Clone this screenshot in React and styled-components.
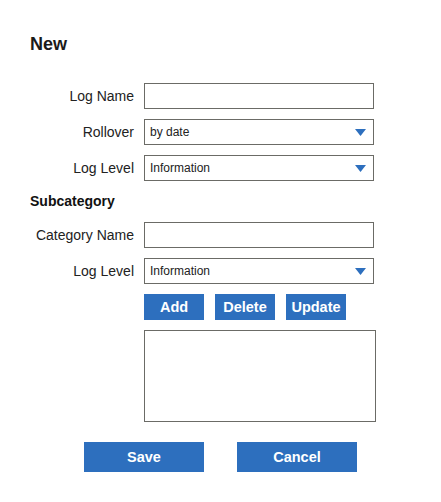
import React from "react";
import styled, { createGlobalStyle } from "styled-components";

const GlobalStyle = createGlobalStyle`
  html, body {
    margin: 0;
    padding: 0;
    background: #ffffff;
  }
  body {
    font-family: "Liberation Sans", Arial, sans-serif;
    color: #222222;
  }
`;

const BLUE = "#2d6fbe";
const BORDER = "#6b6b66";

const Page = styled.div`
  width: 441px;
  min-height: 502px;
  box-sizing: border-box;
  padding-top: 34px;
`;

const Title = styled.h1`
  margin: 0 0 28px 30px;
  font-size: 18px;
  line-height: 21px;
  font-weight: bold;
  color: #1a1a1a;
`;

const Form = styled.div`
  margin-left: 30px;
  display: grid;
  grid-template-columns: 104px 232px;
  grid-auto-rows: auto;
  column-gap: 10px;
  row-gap: 10px;
  align-items: center;
`;

const Label = styled.label`
  font-size: 14px;
  line-height: 16px;
  text-align: right;
  color: #222222;
  white-space: nowrap;
`;

const SectionTitle = styled.div`
  grid-column: 1 / -1;
  margin: 2px 0 3px;
  font-size: 14px;
  line-height: 16px;
  font-weight: bold;
  color: #111111;
`;

const TextInput = styled.input.attrs({ type: "text" })`
  width: 230px;
  height: 26px;
  box-sizing: border-box;
  margin: 0;
  padding: 0 6px;
  border: 1px solid ${BORDER};
  border-radius: 0;
  font-family: "Liberation Sans", Arial, sans-serif;
  font-size: 12px;
  color: #222222;
  outline: none;
`;

const SelectWrap = styled.div`
  position: relative;
  width: 230px;
  height: 26px;
`;

const Select = styled.select`
  appearance: none;
  -webkit-appearance: none;
  width: 100%;
  height: 100%;
  box-sizing: border-box;
  margin: 0;
  padding: 0 24px 0 5px;
  border: 1px solid ${BORDER};
  border-radius: 0;
  background: #ffffff;
  font-family: "Liberation Sans", Arial, sans-serif;
  font-size: 12px;
  color: #222222;
  outline: none;
`;

const Arrow = styled.svg`
  position: absolute;
  right: 8px;
  top: 10px;
  pointer-events: none;
`;

const Field = styled.div`
  grid-column: 2;
`;

const ActionRow = styled.div`
  grid-column: 2;
  display: flex;
  gap: 11px;
`;

const Button = styled.button`
  width: ${(p) => (p.wide ? "120px" : "60px")};
  height: ${(p) => (p.wide ? "30px" : "26px")};
  margin: 0;
  padding: 0;
  border: none;
  border-radius: 0;
  background: ${BLUE};
  color: #ffffff;
  font-family: "Liberation Sans", Arial, sans-serif;
  font-size: 14.5px;
  font-weight: bold;
  cursor: pointer;
`;

const ListBox = styled.div`
  grid-column: 2;
  width: 232px;
  height: 92px;
  box-sizing: border-box;
  border: 1px solid ${BORDER};
  background: #ffffff;
`;

const Footer = styled.div`
  display: flex;
  justify-content: center;
  gap: 33px;
  margin-top: 20px;
`;

function Dropdown({ value, options }) {
  return (
    <SelectWrap>
      <Select defaultValue={value}>
        {options.map((o) => (
          <option key={o}>{o}</option>
        ))}
      </Select>
      <Arrow width="11" height="7" viewBox="0 0 11 7">
        <path d="M0 0 H11 L5.5 7 Z" fill={BLUE} />
      </Arrow>
    </SelectWrap>
  );
}

const levels = ["Information", "Warning", "Error", "Debug"];

export default function App() {
  return (
    <Page>
      <GlobalStyle />
      <Title>New</Title>
      <Form>
        <Label>Log Name</Label>
        <Field>
          <TextInput />
        </Field>
        <Label>Rollover</Label>
        <Field>
          <Dropdown value="by date" options={["by date", "by size"]} />
        </Field>
        <Label>Log Level</Label>
        <Field>
          <Dropdown value="Information" options={levels} />
        </Field>

        <SectionTitle>Subcategory</SectionTitle>

        <Label>Category Name</Label>
        <Field>
          <TextInput />
        </Field>
        <Label>Log Level</Label>
        <Field>
          <Dropdown value="Information" options={levels} />
        </Field>
        <ActionRow>
          <Button>Add</Button>
          <Button>Delete</Button>
          <Button>Update</Button>
        </ActionRow>
        <ListBox />
      </Form>
      <Footer>
        <Button wide>Save</Button>
        <Button wide>Cancel</Button>
      </Footer>
    </Page>
  );
}
